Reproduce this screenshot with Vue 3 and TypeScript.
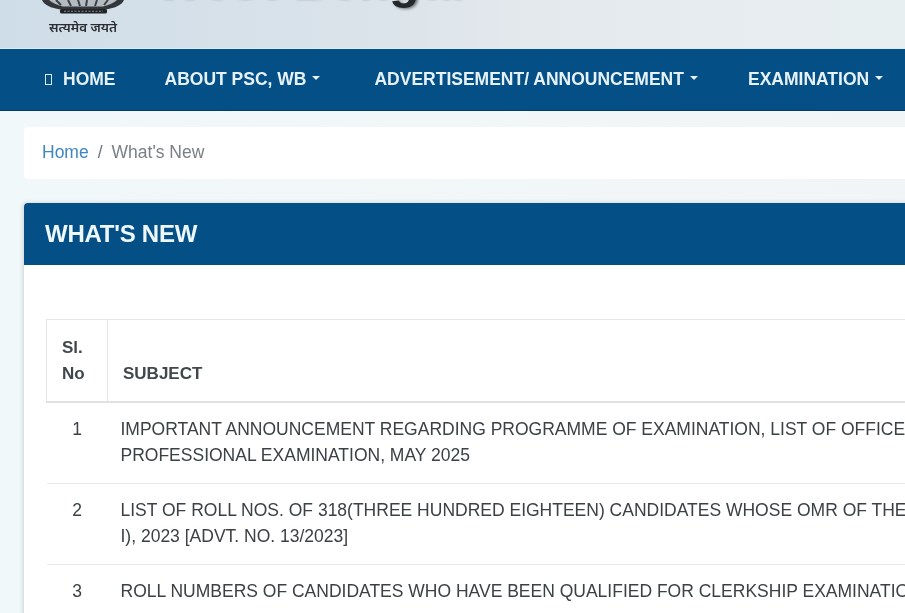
<script setup lang="ts">
interface Row { no: number; lines: string[] }
const navItems = [
  { label: 'ABOUT PSC, WB', caret: true },
  { label: 'ADVERTISEMENT/ ANNOUNCEMENT', caret: true },
  { label: 'EXAMINATION', caret: true },
]
const rows: Row[] = [
  { no: 1, lines: ['IMPORTANT ANNOUNCEMENT REGARDING PROGRAMME OF EXAMINATION, LIST OF OFFICERS', 'PROFESSIONAL EXAMINATION, MAY 2025'] },
  { no: 2, lines: ['LIST OF ROLL NOS. OF 318(THREE HUNDRED EIGHTEEN) CANDIDATES WHOSE OMR OF THE', 'I), 2023 [ADVT. NO. 13/2023]'] },
  { no: 3, lines: ['ROLL NUMBERS OF CANDIDATES WHO HAVE BEEN QUALIFIED FOR CLERKSHIP EXAMINATION'] },
]
</script>

<template>
  <div class="page">
    <header class="brand">
      <div class="emblem">
        <svg class="lions" width="86" height="15" viewBox="0 0 86 15" aria-hidden="true">
          <path d="M2 0 C4 5 11 8 20 9.5 L66 9.5 C75 8 82 5 84 0 Z" fill="#33373b" />
          <path d="M9 0 C12 3 17 5 23 6.5 L63 6.5 C69 5 74 3 77 0 Z" fill="#b4bcc2" />
          <path d="M16 0 L21 5 M28 0 L31 6 M38 0 L40 6 M47 0 L46 6 M57 0 L55 6 M68 0 L64 5" stroke="#3c4145" stroke-width="2" fill="none" />
          <rect x="20" y="9" width="47" height="4.5" rx="1.5" fill="#202427" />
          <path d="M24 11.2 H63" stroke="#858d93" stroke-width="1" stroke-dasharray="2 1.5" />
        </svg>
        <span class="motto">सत्यमेव जयते</span>
      </div>
      <div class="title">West Bengal</div>
    </header>

    <nav class="nav">
      <a class="nav-link home"><span class="tofu"></span>HOME</a>
      <a v-for="item in navItems" :key="item.label" class="nav-link">
        {{ item.label }}<span v-if="item.caret" class="caret"></span>
      </a>
    </nav>

    <main class="content">
      <div class="crumbs">
        <a class="crumb-link">Home</a>
        <span class="sep">/</span>
        <span class="crumb-current">What's New</span>
      </div>

      <section class="panel">
        <h1 class="panel-head">WHAT'S NEW</h1>
        <div class="panel-body">
          <table class="list">
            <thead>
              <tr>
                <th class="col-no">Sl.<br />No</th>
                <th class="col-subject">SUBJECT</th>
              </tr>
            </thead>
            <tbody>
              <tr v-for="row in rows" :key="row.no">
                <td class="cell-no">{{ row.no }}</td>
                <td class="cell-subject">
                  <div v-for="line in row.lines" :key="line">{{ line }}</div>
                </td>
              </tr>
            </tbody>
          </table>
        </div>
      </section>
    </main>
  </div>
</template>

<style>
html, body { margin: 0; padding: 0; overflow: hidden; }
</style>

<style scoped>
.page {
  width: 905px;
  height: 613px;
  overflow: hidden;
  background: #f0f6f7;
  font-family: "Liberation Sans", Arial, sans-serif;
  color: #3d4246;
  filter: blur(0.3px);
}
.brand {
  height: 48px;
  overflow: hidden;
  display: flex;
  align-items: flex-start;
  background: linear-gradient(90deg, #cfdde8 0%, #dae3ea 40%, #e4e9ed 60%, #e8eff1 100%);
  border-bottom: 1px solid #dcecf5;
}
.emblem {
  width: 86px;
  margin-left: 40px;
  display: flex;
  flex-direction: column;
  align-items: center;
  flex: none;
}
.lions { display: block; }
.motto {
  margin-top: 3px;
  font-family: "Noto Sans", "Noto Sans Devanagari", "Liberation Serif", sans-serif;
  font-size: 13.4px;
  font-weight: 600;
  line-height: 18px;
  color: #2b2f33;
  white-space: nowrap;
}
.title {
  margin-left: 28px;
  margin-top: -44px;
  font-size: 50px;
  line-height: 50px;
  font-weight: 700;
  letter-spacing: 1px;
  color: #25282b;
  text-shadow: 2px 1px 3px rgba(0, 0, 0, 0.5);
  white-space: nowrap;
}
.nav {
  height: 62px;
  display: flex;
  align-items: center;
  gap: 50px;
  padding-left: 45px;
  background: #044f86;
  border-bottom: 1px solid #063a5e;
  box-sizing: border-box;
  white-space: nowrap;
}
.nav-link {
  display: flex;
  align-items: center;
  font-size: 17.5px;
  font-weight: 700;
  color: #e6f2f8;
}
.nav-link:nth-child(3) { margin-left: 4px; }
.home { margin-right: -1px; }
.tofu {
  width: 5px;
  height: 9px;
  border: 1.5px solid #dcebf4;
  margin-right: 11px;
}
.caret {
  width: 0;
  height: 0;
  margin-left: 6px;
  margin-bottom: 3px;
  border-top: 4px solid #e6f2f8;
  border-left: 4px solid transparent;
  border-right: 4px solid transparent;
}
.content {
  padding: 16px 0 0 24px;
  background: linear-gradient(90deg, #f1f8f9 0%, #f2f5f6 100%);
  height: 502px;
  box-sizing: border-box;
}
.crumbs {
  width: 1300px;
  height: 52px;
  display: flex;
  align-items: center;
  padding: 0 0 2px 18px;
  box-sizing: border-box;
  background: #fff;
  border-radius: 4px;
  font-size: 17.5px;
}
.crumb-link { color: #3f86c4; }
.sep { margin: 0 9px; color: #6c757d; }
.crumb-current { color: #7a8086; }
.panel {
  width: 1300px;
  margin-top: 24px;
  background: #fff;
  border-radius: 4px;
  box-shadow: -1px 0 4px rgba(60, 80, 100, 0.22);
}
.panel-head {
  margin: 0;
  height: 62px;
  line-height: 62px;
  padding-left: 21px;
  background: #044f86;
  border-radius: 4px 4px 0 0;
  color: #eef8fb;
  font-size: 24px;
  font-weight: 700;
  letter-spacing: -0.25px;
}
.panel-body { padding: 54px 22px 0; }
.list {
  width: 100%;
  border-collapse: collapse;
  white-space: nowrap;
}
th {
  border: 1px solid #e4e6e7;
  border-bottom: 2px solid #dfe1e3;
  padding: 15px 15px 14px;
  font-size: 17px;
  line-height: 26px;
  color: #42474b;
  text-align: left;
  vertical-align: bottom;
}
.col-no { width: 30px; }
td {
  border-bottom: 1px solid #e4e6e7;
  font-size: 17.5px;
  line-height: 26px;
  padding: 13px 13px 15px;
  vertical-align: top;
  color: #3c4145;
}
.cell-no { text-align: center; }
</style>
